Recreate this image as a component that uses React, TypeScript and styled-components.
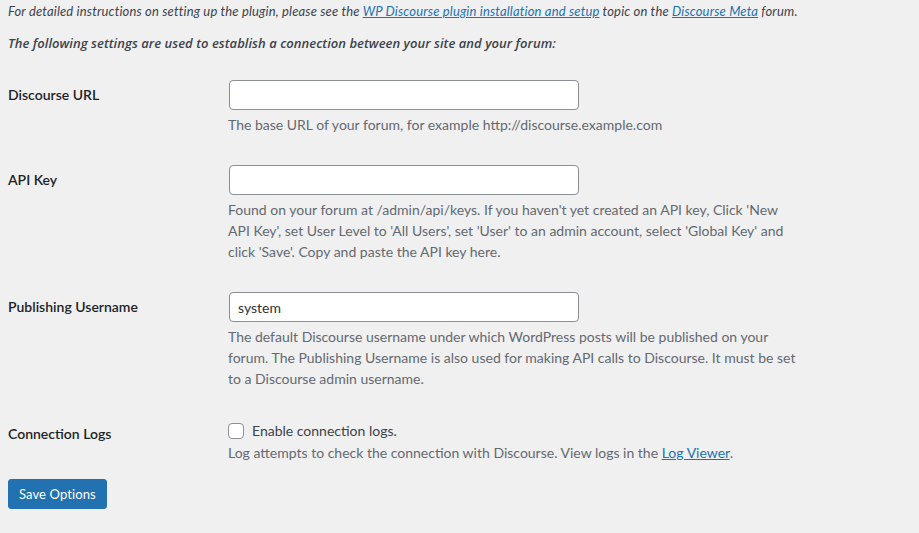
import React from "react";
import styled, { createGlobalStyle } from "styled-components";

const FONT = `"Segoe UI", Lato, "Liberation Sans", sans-serif`;
const LEAD_FONT = `"Segoe UI", "Open Sans", "Liberation Sans", sans-serif`;

const GlobalStyle = createGlobalStyle`
  html, body {
    margin: 0;
    padding: 0;
    background: #f0f0f1;
  }
  body {
    font-family: ${FONT};
    color: #3c434a;
    font-size: 13px;
  }
`;

const Page = styled.div`
  padding: 1px 8px 24px 8px;
`;

const Intro = styled.p<{ $strong?: boolean }>`
  margin: 0 0 12px 0;
  font-family: ${(p) => (p.$strong ? LEAD_FONT : FONT)};
  font-size: 13px;
  line-height: 20px;
  font-style: italic;
  font-weight: ${(p) => (p.$strong ? 600 : 400)};
  letter-spacing: ${(p) => (p.$strong ? "0.045px" : "0.16px")};
  color: #3c434a;
  white-space: nowrap;
`;

const Link = styled.a`
  color: #2271b1;
  text-decoration: underline;
`;

const Form = styled.form`
  display: flex;
  flex-direction: column;
`;

const Row = styled.div`
  display: grid;
  grid-template-columns: 220px 1fr;
`;

const Label = styled.label`
  padding: 21px 10px 19px 0;
  font-size: 14px;
  line-height: 18px;
  font-weight: 600;
  color: #1d2327;
`;

const Field = styled.div`
  padding: 15px 0;
  display: flex;
  flex-direction: column;
  align-items: flex-start;
`;

const TextInput = styled.input`
  box-sizing: border-box;
  width: 350px;
  height: 30px;
  margin: 0 1px;
  padding: 0 8px;
  border: 1px solid #8c8f94;
  border-radius: 4px;
  background: #fff;
  font-family: ${FONT};
  font-size: 14px;
  color: #2c3338;
  outline: none;
`;

const Description = styled.p`
  margin: 4px 0 0 0;
  font-size: 14px;
  line-height: 21px;
  color: #646970;
  white-space: nowrap;
`;

const CheckLine = styled.label`
  display: flex;
  align-items: center;
  height: 23px;
  font-size: 14px;
  color: #3c434a;
`;

const Checkbox = styled.input`
  appearance: none;
  box-sizing: border-box;
  width: 16px;
  height: 16px;
  margin: 0 8px 0 0;
  border: 1px solid #8c8f94;
  border-radius: 4px;
  background: #fff;
`;

const CheckDescription = styled(Description)`
  margin-top: 0;
`;

const Submit = styled.div`
  padding-top: 1px;
`;

const Button = styled.button`
  box-sizing: border-box;
  height: 30px;
  padding: 0 10px;
  border: 1px solid #2271b1;
  border-radius: 3px;
  background: #2271b1;
  color: #fff;
  font-family: ${FONT};
  font-size: 13px;
  letter-spacing: 0.1px;
  cursor: pointer;
`;

export default function App() {
  return (
    <>
      <GlobalStyle />
      <Page>
        <Intro>
          For detailed instructions on setting up the plugin, please see the{" "}
          <Link href="#">WP Discourse plugin installation and setup</Link> topic on the{" "}
          <Link href="#">Discourse Meta</Link> forum.
        </Intro>
        <Intro $strong>
          The following settings are used to establish a connection between your site and your forum:
        </Intro>
        <Form onSubmit={(e) => e.preventDefault()}>
          <Row>
            <Label htmlFor="url">Discourse URL</Label>
            <Field>
              <TextInput id="url" type="text" defaultValue="" />
              <Description>The base URL of your forum, for example http://discourse.example.com</Description>
            </Field>
          </Row>
          <Row>
            <Label htmlFor="key">API Key</Label>
            <Field>
              <TextInput id="key" type="text" defaultValue="" />
              <Description>
                Found on your forum at /admin/api/keys. If you haven't yet created an API key, Click 'New
                <br />
                API Key', set User Level to 'All Users', set 'User' to an admin account, select 'Global Key' and
                <br />
                click 'Save'. Copy and paste the API key here.
              </Description>
            </Field>
          </Row>
          <Row>
            <Label htmlFor="user">Publishing Username</Label>
            <Field>
              <TextInput id="user" type="text" defaultValue="system" />
              <Description>
                The default Discourse username under which WordPress posts will be published on your
                <br />
                forum. The Publishing Username is also used for making API calls to Discourse. It must be set
                <br />
                to a Discourse admin username.
              </Description>
            </Field>
          </Row>
          <Row>
            <Label htmlFor="logs">Connection Logs</Label>
            <Field>
              <CheckLine>
                <Checkbox id="logs" type="checkbox" />
                Enable connection logs.
              </CheckLine>
              <CheckDescription>
                Log attempts to check the connection with Discourse. View logs in the{" "}
                <Link href="#">Log Viewer</Link>.
              </CheckDescription>
            </Field>
          </Row>
          <Submit>
            <Button type="submit">Save Options</Button>
          </Submit>
        </Form>
      </Page>
    </>
  );
}
